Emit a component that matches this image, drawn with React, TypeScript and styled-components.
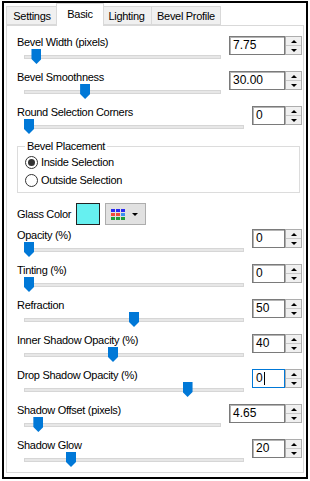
import styled, { createGlobalStyle } from "styled-components"

const GlobalStyle = createGlobalStyle`
    body {
        margin: 0;
        background: #fff;
        font-family: "Liberation Sans", Arial, sans-serif;
        font-size: 11px;
        letter-spacing: -0.3px;
        color: #000;
    }
`

const Frame = styled.div`
    box-sizing: border-box;
    width: 306px;
    height: 478px;
    margin: 1px 0 0 2px;
    border: 2px solid #000;
    padding: 0 2px 4px 2px;
    display: flex;
    flex-direction: column;
`

const TabBar = styled.div`
    display: flex;
    align-items: flex-end;
    height: 22px;
    flex-shrink: 0;
`

const Tab = styled.div<{ $w: number; $active?: boolean }>`
    box-sizing: border-box;
    width: ${p => p.$w}px;
    height: ${p => (p.$active ? 23 : 19)}px;
    margin: ${p => (p.$active ? "0 -2px -1px -2px" : "0 0 0 -1px")};
    position: relative;
    z-index: ${p => (p.$active ? 1 : 0)};
    border: 1px solid #d9d9d9;
    border-bottom: ${p => (p.$active ? "none" : "1px solid #d9d9d9")};
    background: ${p => (p.$active ? "#fff" : "#f0f0f0")};
    display: flex;
    align-items: center;
    justify-content: center;
    padding-bottom: ${p => (p.$active ? 2 : 0)}px;
    &:first-child {
        margin-left: 0;
    }
`

const Panel = styled.div`
    flex: 1;
    border: 1px solid #d9d9d9;
    background: #fff;
    padding: 8px 1px 0 10px;
    display: flex;
    flex-direction: column;
`

const Row = styled.div`
    display: grid;
    grid-template-columns: 1fr auto;
    column-gap: 8px;
    height: 35px;
`

const Field = styled.div`
    display: flex;
    flex-direction: column;
`

const Label = styled.div`
    height: 16px;
    line-height: 16px;
    white-space: nowrap;
`

const Slider = styled.div`
    position: relative;
    height: 12px;
    margin: 1px 0 0 7px;
    display: flex;
    align-items: center;
`

const Track = styled.div`
    box-sizing: border-box;
    width: 100%;
    height: 4px;
    background: #e7e7e7;
    border: 1px solid #d6d6d6;
`

const Thumb = styled.div<{ $pos: number }>`
    position: absolute;
    top: -2px;
    left: calc((100% - 10px) * ${p => p.$pos});
    width: 10px;
    height: 15px;
    background: #0078d7;
    clip-path: polygon(0 0, 100% 0, 100% 66%, 50% 100%, 0 66%);
`

const Spinner = styled.div`
    display: flex;
    margin-top: 2px;
    height: 19px;
`

const SpinInput = styled.div<{ $w: number; $focus?: boolean }>`
    box-sizing: border-box;
    width: ${p => p.$w}px;
    height: 19px;
    border: 1px solid ${p => (p.$focus ? "#0078d7" : "#7a7a7a")};
    box-shadow: ${p => (p.$focus ? "none" : "inset 1px 1px 0 #b4b4b4")};
    background: #fff;
    font-size: 12px;
    letter-spacing: 0;
    line-height: 17px;
    padding-left: 3px;
    display: flex;
    align-items: center;
`

const Caret = styled.span`
    display: inline-block;
    width: 1px;
    height: 13px;
    background: #000;
    margin-left: 1px;
`

const SpinButtons = styled.div`
    box-sizing: border-box;
    width: 17px;
    height: 19px;
    border: 1px solid #adadad;
    display: flex;
    flex-direction: column;
`

const SpinButton = styled.div<{ $down?: boolean }>`
    flex: 1;
    background: #f0f0f0;
    display: flex;
    align-items: center;
    justify-content: center;
    border-top: ${p => (p.$down ? "1px solid #c8c8c8" : "none")};
    &::after {
        content: "";
        border-left: 3px solid transparent;
        border-right: 3px solid transparent;
        ${p => (p.$down ? "border-top: 3px solid #000;" : "border-bottom: 3px solid #000;")}
    }
`

const Group = styled.fieldset`
    margin: 0 2px 10px 0;
    border: 1px solid #dcdcdc;
    padding: 0 0 3px 7px;
    min-width: 0;
`

const Legend = styled.legend`
    padding: 0 2px;
    line-height: 14px;
`

const RadioRow = styled.div`
    display: flex;
    align-items: center;
    height: 18px;
    gap: 3px;
`

const RadioCircle = styled.span<{ $checked?: boolean }>`
    box-sizing: border-box;
    width: 13px;
    height: 13px;
    border-radius: 50%;
    border: 1px solid #333;
    background: #fff;
    display: flex;
    align-items: center;
    justify-content: center;
    &::after {
        content: "";
        width: 7px;
        height: 7px;
        border-radius: 50%;
        background: ${p => (p.$checked ? "#333" : "transparent")};
    }
`

const ColorRow = styled.div`
    display: flex;
    align-items: center;
    height: 22px;
    margin-bottom: 2px;
`

const ColorLabel = styled.div`
    width: 59px;
`

const Swatch = styled.div<{ $color: string }>`
    box-sizing: border-box;
    width: 24px;
    height: 22px;
    border: 1px solid #222;
    background: ${p => p.$color};
`

const PickerButton = styled.div`
    box-sizing: border-box;
    width: 41px;
    height: 22px;
    margin-left: 5px;
    border: 1px solid #adadad;
    background: #e1e1e1;
    display: flex;
    align-items: center;
    padding-left: 5px;
    gap: 7px;
`

const Palette = styled.div`
    display: grid;
    grid-template-columns: repeat(3, 4px);
    grid-template-rows: repeat(3, 3px);
    gap: 1px;
`

const Cell = styled.span<{ $c: string }>`
    background: ${p => p.$c};
`

const DropArrow = styled.span`
    border-left: 3px solid transparent;
    border-right: 3px solid transparent;
    border-top: 3px solid #000;
`

type Ctrl = {
    label: string
    value: string
    pos: number
    wide?: boolean
    focus?: boolean
}

const topRows: Ctrl[] = [
    { label: "Bevel Width (pixels)", value: "7.75", pos: 0.04, wide: true },
    { label: "Bevel Smoothness", value: "30.00", pos: 0.3, wide: true },
    { label: "Round Selection Corners", value: "0", pos: 0 },
]

const bottomRows: Ctrl[] = [
    { label: "Opacity (%)", value: "0", pos: 0 },
    { label: "Tinting (%)", value: "0", pos: 0 },
    { label: "Refraction", value: "50", pos: 0.5 },
    { label: "Inner Shadow Opacity (%)", value: "40", pos: 0.4 },
    { label: "Drop Shadow Opacity (%)", value: "0", pos: 0.755, focus: true },
    { label: "Shadow Offset (pixels)", value: "4.65", pos: 0.05, wide: true },
    { label: "Shadow Glow", value: "20", pos: 0.2 },
]

const paletteColors = [
    "#2a2af0", "#2a2af0", "#2a2af0",
    "#f04a3a", "#f04a3a", "#3a8ff0",
    "#1f9e3a", "#1f9e3a", "#1f9e3a",
]

const ControlRow = ({ c }: { c: Ctrl }) => (
    <Row>
        <Field>
            <Label>{c.label}</Label>
            <Slider>
                <Track />
                <Thumb $pos={c.pos} />
            </Slider>
        </Field>
        <Spinner>
            <SpinInput $w={c.wide ? 56 : 33} $focus={c.focus}>
                {c.value}
                {c.focus && <Caret />}
            </SpinInput>
            <SpinButtons>
                <SpinButton />
                <SpinButton $down />
            </SpinButtons>
        </Spinner>
    </Row>
)

const App = () => {
    return <>
        <GlobalStyle />
        <Frame>
            <TabBar>
                <Tab $w={52}>Settings</Tab>
                <Tab $w={48} $active>Basic</Tab>
                <Tab $w={51}>Lighting</Tab>
                <Tab $w={70}>Bevel Profile</Tab>
            </TabBar>
            <Panel>
                {topRows.map(c => <ControlRow key={c.label} c={c} />)}

                <Group>
                    <Legend>Bevel Placement</Legend>
                    <RadioRow>
                        <RadioCircle $checked />
                        Inside Selection
                    </RadioRow>
                    <RadioRow>
                        <RadioCircle />
                        Outside Selection
                    </RadioRow>
                </Group>

                <ColorRow>
                    <ColorLabel>Glass Color</ColorLabel>
                    <Swatch $color="#66f0f0" />
                    <PickerButton>
                        <Palette>
                            {paletteColors.map((c, i) => <Cell key={i} $c={c} />)}
                        </Palette>
                        <DropArrow />
                    </PickerButton>
                </ColorRow>

                {bottomRows.map(c => <ControlRow key={c.label} c={c} />)}
            </Panel>
        </Frame>
    </>
}

export default App
